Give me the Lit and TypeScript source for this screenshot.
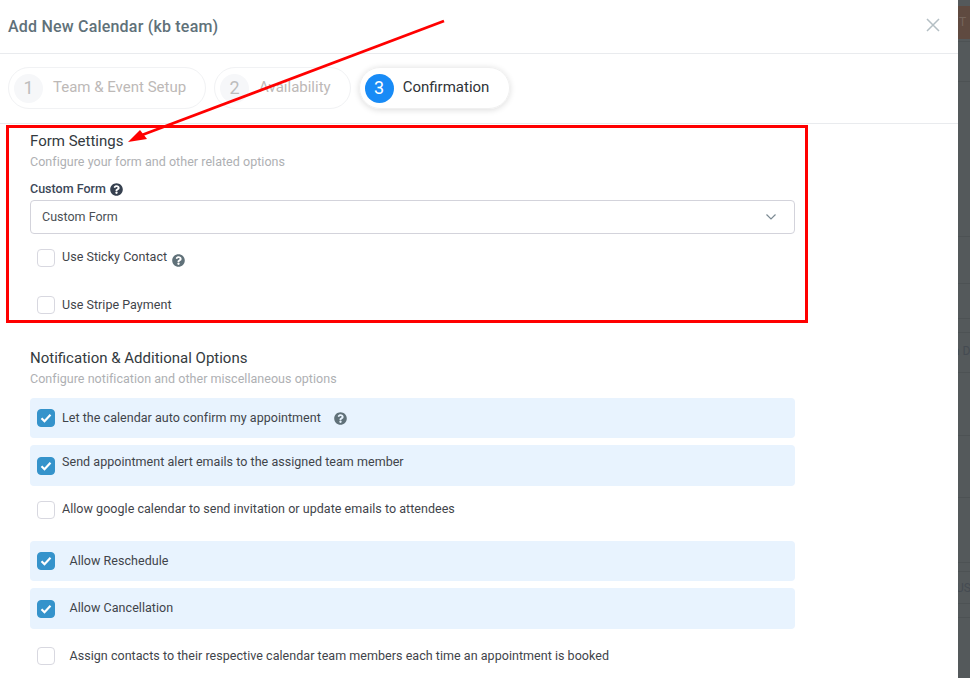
import { LitElement, html, css, svg } from "lit";
import { customElement } from "lit/decorators.js";

const help = (size: number, color: string) => html`<svg class="help" width=${size} height=${size} viewBox="0 0 512 512"><path fill=${color} d="M504 256c0 137-111 248-248 248S8 393 8 256 119 8 256 8s248 111 248 248zM262.700 90c-54.500 0-89.300 23-116.600 63.800-3.500 5.300-2.400 12.400 2.700 16.300l34.700 26.300c5.200 3.900 12.600 3 16.700-2.100 17.900-22.700 30.100-35.800 57.300-35.800 20.400 0 45.700 13.100 45.700 32.900 0 15-12.400 22.700-32.500 34C247.100 238.500 216 254.900 216 296v4c0 6.600 5.400 12 12 12h56c6.600 0 12-5.400 12-12v-1.300c0-28.500 83.200-29.600 83.200-106.700 0-58-60.200-102-116.500-102zM256 338c-25.400 0-46 20.600-46 46 0 25.400 20.600 46 46 46s46-20.600 46-46c0-25.400-20.600-46-46-46z"/></svg>`;

const box = (checked: boolean) => html`<span class="box ${checked ? "on" : ""}">${checked ? html`<svg width="12" height="10" viewBox="0 0 12 10"><path d="M1.500 5.200 4.500 8.200 10.500 1.800" fill="none" stroke="#fff" stroke-width="2.200"/></svg>` : ""}</span>`;

@customElement("app-root")
export class AppRoot extends LitElement {
  static styles = css`
    :host { display: block; width: 970px; height: 678px; position: relative; overflow: hidden; font-family: Roboto, "Liberation Sans", sans-serif; background: #54595b; }
    .page { display: flex; height: 678px; }
    .modal { width: 958px; flex: none; background: #fff; }
    .head { height: 53px; box-sizing: content-box; border-bottom: 1px solid #e9ebee; display: flex; align-items: center; justify-content: space-between; padding: 0 18px 0 8px; }
    .title { font-size: 16px; font-weight: 500; color: #607179; letter-spacing: 0.2px; }
    .close { display: block; margin-top: -4px; }
    .steps { height: 70px; border-bottom: 1px solid #e9ebee; display: flex; align-items: flex-start; gap: 8px; padding: 13px 0 0 8px; box-sizing: border-box; }
    .step { height: 42px; box-sizing: border-box; border: 1px solid #f1f2f4; border-radius: 21px; display: flex; align-items: center; padding: 0 19px 2px 5px; font-size: 15px; color: #bdb9b7; }
    .num { width: 29px; height: 29px; margin-bottom: -2px; padding-bottom: 2px; box-sizing: border-box; border-radius: 50%; background: #f6f7f9; color: #bdbdbd; font-size: 18px; display: flex; align-items: center; justify-content: center; margin-right: 10px; }
    .step.active { color: #2f3337; box-shadow: 0 1px 6px rgba(0,0,0,.14); border-color: #f0f0f0; padding-right: 20px; }
    .step.active .num { background: #188bf6; color: #fff; margin-right: 9px; }
    .body { padding: 0 163px 0 30px; }
    h2 { margin: 0; font-size: 15px; font-weight: 400; color: #333a40; line-height: 20px; }
    .sub { font-size: 12.500px; color: #aeb0b3; line-height: 16px; margin-top: 3px; letter-spacing: 0.035px; }
    .first { padding-top: 7px; }
    .label { display: flex; align-items: center; gap: 4px; font-size: 12.500px; font-weight: 500; color: #3c4858; line-height: 16px; margin-top: 11px; }
    .select { height: 34px; box-sizing: border-box; border: 1px solid #d3d3db; border-radius: 4px; display: flex; align-items: center; justify-content: space-between; padding: 0 18px 1px 11px; font-size: 12.500px; color: #4a4f55; margin-top: 3px; }
    .row { display: flex; align-items: center; border-radius: 4px; padding-left: 7px; font-size: 12.500px; color: #3f444a; box-sizing: border-box; letter-spacing: 0.04px; }
    .row.on { background: #e8f3fe; }
    .box { width: 18px; height: 18px; box-sizing: border-box; flex: none; border: 1px solid #d8d8e0; border-radius: 4px; background: #fff; margin-right: 7px; display: flex; align-items: center; justify-content: center; }
    .box.on { background: #3593cb; border-color: #3593cb; }
    .wide .box { margin-right: 14.500px; }
    .help { display: block; flex: none; }
    .up { padding-bottom: 9px; }
    .up-s { padding-bottom: 3px; }
    .lift { padding-bottom: 3px; }
    .lift-s { padding-bottom: 1px; }
    .hint { margin-left: 5px; margin-top: 5px; }
    .form-a { height: 47px; }
    .form-b { height: 30px; margin-top: 9px; }
    .notif { margin-top: 28px; }
    .r1 { height: 40px; margin-top: 11px; }
    .r1 .help { margin-left: 13px; }
    .r2 { height: 41px; margin-top: 7px; }
    .r3 { height: 41px; margin-top: 3px; }
    .r4 { height: 40px; margin-top: 11px; }
    .r5 { height: 41px; margin-top: 7px; }
    .r6 { height: 40px; margin-top: 7px; }
    .strip { flex: 1; position: relative; overflow: hidden; background:
      linear-gradient(#4d5254,#4d5254) 0 41px/100% 1px no-repeat,
      linear-gradient(#4d5254,#4d5254) 0 81px/100% 1px no-repeat,
      linear-gradient(#4d5254,#4d5254) 0 236px/100% 1px no-repeat,
      linear-gradient(#4d5254,#4d5254) 0 283px/100% 1px no-repeat,
      linear-gradient(#4d5254,#4d5254) 0 318px/100% 1px no-repeat,
      linear-gradient(#4d5254,#4d5254) 0 332px/100% 1px no-repeat,
      linear-gradient(#4d5254,#4d5254) 0 372px/100% 1px no-repeat,
      linear-gradient(#4d5254,#4d5254) 0 435px/100% 1px no-repeat,
      linear-gradient(#4d5254,#4d5254) 0 497px/100% 1px no-repeat,
      linear-gradient(#4d5254,#4d5254) 0 562px/100% 1px no-repeat,
      linear-gradient(#4d5254,#4d5254) 0 571px/100% 1px no-repeat,
      linear-gradient(#4d5254,#4d5254) 0 603px/100% 1px no-repeat,
      linear-gradient(#4d5254,#4d5254) 0 617px/100% 1px no-repeat, #54595b; }
    .brown { height: 33px; margin-top: 6px; background: #5f4a40; color: #75655c; font-size: 12px; line-height: 33px; white-space: nowrap; padding-left: 1px; letter-spacing: 1px; }
    .ghost { position: absolute; font-size: 12px; color: #454b52; line-height: 14px; white-space: nowrap; }
    .g1 { top: 344px; left: -5px; }
    .g2 { top: 581px; left: -2px; }
    .rbox { position: absolute; left: 6px; top: 125px; width: 802px; height: 198px; box-sizing: border-box; border: 3px solid #ff0000; pointer-events: none; }
    .arrow { position: absolute; left: 0; top: 0; pointer-events: none; }
  `;

  render() {
    return html`<div class="page">
      <div class="modal">
        <div class="head">
          <span class="title">Add New Calendar (kb team)</span>
          <svg class="close" width="14" height="14" viewBox="0 0 14 14"><path d="M1 1 13 13M13 1 1 13" stroke="#b4bfc4" stroke-width="1.500" fill="none"/></svg>
        </div>
        <div class="steps">
          <div class="step"><span class="num">1</span>Team &amp; Event Setup</div>
          <div class="step"><span class="num">2</span>Availability</div>
          <div class="step active"><span class="num">3</span>Confirmation</div>
        </div>
        <div class="body">
          <div class="first">
            <h2>Form Settings</h2>
            <div class="sub">Configure your form and other related options</div>
            <div class="label">Custom Form ${help(13, "#36404f")}</div>
            <div class="select">Custom Form
              <svg width="10" height="6" viewBox="0 0 10 6"><path d="M.5.500 5 5 9.500.500" fill="none" stroke="#7b8a93" stroke-width="1.200"/></svg>
            </div>
            <div class="row form-a">${box(false)}<span class="up-s">Use Sticky Contact</span><span class="hint">${help(13, "#607179")}</span></div>
            <div class="row form-b">${box(false)}<span class="lift-s">Use Stripe Payment</span></div>
          </div>
          <div class="notif">
            <h2>Notification &amp; Additional Options</h2>
            <div class="sub">Configure notification and other miscellaneous options</div>
            <div class="row on r1">${box(true)}<span class="lift-s">Let the calendar auto confirm my appointment</span>${help(13, "#607179")}</div>
            <div class="row on r2">${box(true)}<span class="up">Send appointment alert emails to the assigned team member</span></div>
            <div class="row r3">${box(false)}<span class="lift">Allow google calendar to send invitation or update emails to attendees</span></div>
            <div class="row on r4 wide">${box(true)}<span class="lift-s">Allow Reschedule</span></div>
            <div class="row on r5 wide">${box(true)}<span class="lift">Allow Cancellation</span></div>
            <div class="row r6 wide">${box(false)}<span class="lift-s">Assign contacts to their respective calendar team members each time an appointment is booked</span></div>
          </div>
        </div>
      </div>
      <div class="strip">
        <div class="brown">T H</div>
        <span class="ghost g1">a D</span>
        <span class="ghost g2">US</span>
      </div>
    </div>
    <div class="rbox"></div>
    <svg class="arrow" width="970" height="678">
      ${svg`<path d="M444 21 142 135" stroke="#f00" stroke-width="2.800" fill="none"/><path d="M128 142 140 130 147 139Z" fill="#f00"/>`}
    </svg>`;
  }
}
